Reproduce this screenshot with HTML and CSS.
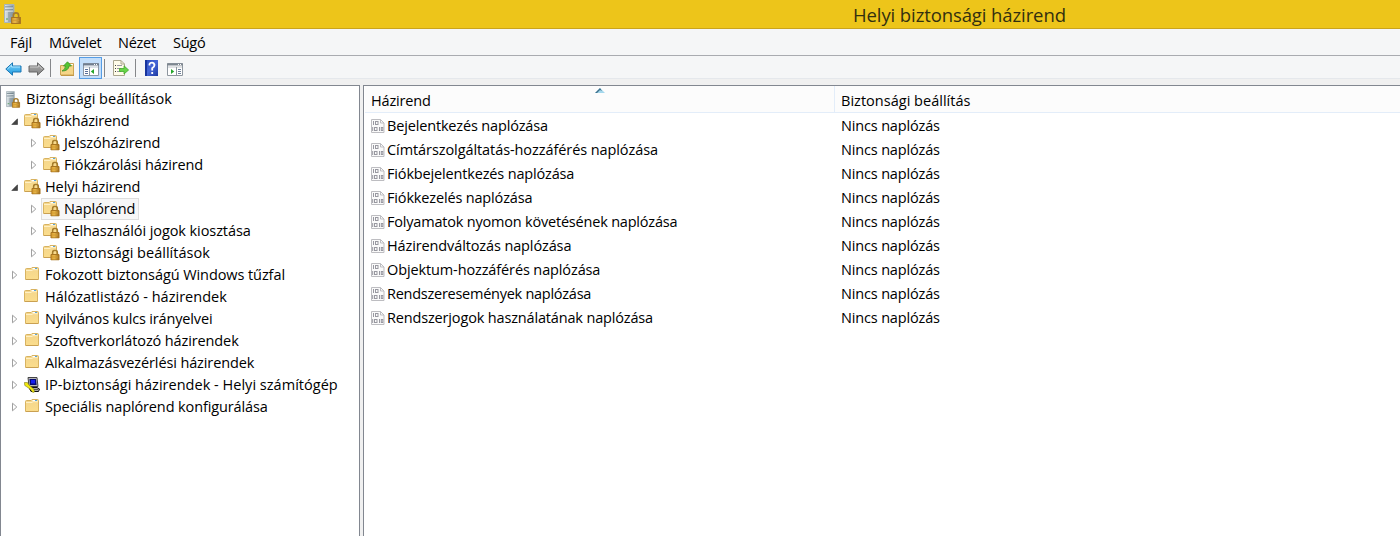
FILE: index.html
```html
<!DOCTYPE html>
<html lang="hu">
<head>
<meta charset="utf-8">
<title>Helyi biztonsági házirend</title>
<link rel="stylesheet" href="styles.css">
</head>
<body>
<svg class="defs" aria-hidden="true">
  <defs>
    <linearGradient id="gf" x1="0" y1="0" x2="0" y2="1"><stop offset="0" stop-color="#f3d58d"/><stop offset="1" stop-color="#fbdd8c"/></linearGradient>
    <linearGradient id="gl" x1="0" y1="0" x2="1" y2="0"><stop offset="0" stop-color="#d69a2c"/><stop offset=".4" stop-color="#e8b84c"/><stop offset="1" stop-color="#9c6b1c"/></linearGradient>
    <linearGradient id="gb" x1="0" y1="0" x2="0" y2="1"><stop offset="0" stop-color="#7cd0f8"/><stop offset="1" stop-color="#1c9ae0"/></linearGradient>
    <linearGradient id="gg" x1="0" y1="0" x2="0" y2="1"><stop offset="0" stop-color="#aaa"/><stop offset="1" stop-color="#858585"/></linearGradient>
    <linearGradient id="gs" x1="0" y1="0" x2="1" y2="0"><stop offset="0" stop-color="#dfe6e9"/><stop offset="1" stop-color="#8b9ba4"/></linearGradient>
    <linearGradient id="gh" x1="0" y1="0" x2="1" y2="1"><stop offset="0" stop-color="#2446b8"/><stop offset=".5" stop-color="#4667d8"/><stop offset="1" stop-color="#1c38a0"/></linearGradient>
  </defs>
  <symbol id="lock" viewBox="0 0 10 11">
    <path d="M2.6 5.500V3.200a2.300 2.300 0 0 1 4.800 0v2.300" fill="none" stroke="#a57c2c" stroke-width="1.500"/>
    <path d="M1 5h8v5.500H1z" fill="url(#gl)" stroke="#a87420"/>
    <path d="M2 7.500h6" stroke="#d39a30"/>
  </symbol>
  <symbol id="folder" viewBox="0 0 14 13">
    <path d="M.5 12.500v-10q0-1 1-1H6l1-1h5.500q1 0 1 1v11z" fill="url(#gf)" stroke="#d8b361"/>
    <path d="M7.500 1.500H12" stroke="#fff"/><path d="M10 1.500h2" stroke="#58a4dc"/>
    <path d="M1 3.500h6l1-.8h5" fill="none" stroke="#fff0c4"/>
    <path d="M1 12.500h12" stroke="#c9a052"/>
  </symbol>
  <symbol id="folderlock" viewBox="0 0 17 16">
    <use href="#folder" width="14" height="13"/>
    <use href="#lock" x="7" y="4.500" width="10" height="11"/>
  </symbol>
  <symbol id="server" viewBox="0 0 18 20">
    <path d="M.5.500h9.500V18.500H.500z" fill="url(#gs)" stroke="#a8b4ba"/>
    <path d="M1 3h8M1 6h8" stroke="#687a84" stroke-width="1"/>
    <path d="M1 4h8M1 7h8" stroke="#edf2f4" stroke-width=".8"/>
    <path d="M4 8h6v10H4z" fill="#758791" opacity=".45"/>
    <path d="M2 15h2" stroke="#4d9e58"/>
    <use href="#lock" x="6.500" y="8" width="11" height="12"/>
  </symbol>
  <symbol id="closed" viewBox="0 0 7 10"><path d="M1.500 1.200 5.800 5 1.500 8.800z" fill="#fff" stroke="#a0a0a0"/></symbol>
  <symbol id="open" viewBox="0 0 7 7"><path d="M6.500.8v5.700H.8z" fill="#444" stroke="#333" stroke-width=".6"/></symbol>
  <symbol id="ipsec" viewBox="0 0 16 16">
    <path d="M4 .5h9l1 9H5z" fill="#b8b8b8" stroke="#444"/><path d="M5.500 2H12l.6 6H6z" fill="#060a74"/><path d="M7 3h4v3.500H7z" fill="#1620f0"/>
    <path d="M5 10.500h8l2.500 1.500-1 2.500H7z" fill="#aaa" stroke="#111"/><path d="M8 12.500h6" stroke="#555"/>
    <path d="M.3 5.500h3.200l1.300 2.300 5 4.200.7 3-1.700.5-2-2.700-4-3-2-1.300z" fill="#f0e810" stroke="#66600c" stroke-width=".5"/>
  </symbol>
  <symbol id="policy" viewBox="0 0 14 14">
    <path d="M.5.500h9l3.500 3.500v9.500H.5z" fill="#fafafa" stroke="#bdbdc1"/><path d="M9.500.5V4H13" fill="none" stroke="#bdbdc1"/>
    <path d="M2.500 2v4M8.500 8v4" stroke="#9898a0"/><rect x="4.500" y="2.500" width="2.500" height="3" fill="none" stroke="#9898a0"/>
    <rect x="3.500" y="8.500" width="2.500" height="3" fill="none" stroke="#9898a0"/><rect x="10.300" y="8.500" width="1.500" height="3" fill="none" stroke="#9898a0"/><path d="M1.700 8v4" stroke="#9898a0"/>
  </symbol>
  <symbol id="back" viewBox="0 0 17 14"><path d="M.8 7 7.500.800V4H16v6H7.500v3.200z" fill="url(#gb)" stroke="#1c77b4"/><path d="M2.500 7 6.500 3.200V5H15" fill="none" stroke="#a9e4ff"/></symbol>
  <symbol id="forward" viewBox="0 0 17 14"><path d="M16.200 7 9.500.800V4H1v6h8.500v3.200z" fill="url(#gg)" stroke="#686868"/><path d="M2 5h8.500V3.200L14.300 7" fill="none" stroke="#c8c8c8"/></symbol>
  <symbol id="up" viewBox="0 0 15 15">
    <path d="M.5 14V4.500h6l1-2h6V14z" fill="#f5d588" stroke="#cda453"/><path d="M9 3.500h4" stroke="#fff"/><path d="M1 14.500h13" stroke="#c39847"/>
    <path d="M2 10Q5.500 8.500 5.500 5H3.500L7.500.8l4 4.200H9Q8.500 10 2 10z" fill="#54c530" stroke="#38912a" stroke-width=".8"/>
  </symbol>
  <symbol id="tree" viewBox="0 0 16 13">
    <path d="M.5.500h15v12H.5z" fill="#fff" stroke="#8b96a5"/><path d="M0 1.500h16" stroke="#6f7d8f" stroke-width="2"/><path d="M11 1.500h1M13 1.500h1" stroke="#fff"/>
    <path d="M1 4h14" stroke="#bcc7d4"/><path d="M6.500 4v8" stroke="#8b96a5"/><path d="M2 6.500h3M2 8.500h3M2 10.500h3" stroke="#596f9a"/><path d="M11 6v5L7.800 8.500z" fill="#25a52a"/>
  </symbol>
  <symbol id="pane" viewBox="0 0 16 13">
    <path d="M.5.500h15v12H.5z" fill="#fff" stroke="#8e969f"/><path d="M0 1.500h16" stroke="#7e8790" stroke-width="2"/><path d="M11 1.500h1M13 1.500h1" stroke="#fff"/>
    <path d="M1 4h14" stroke="#c2c6ca"/><path d="M9.500 4v8" stroke="#8e969f"/><path d="M11 6.500h3M11 8.500h3M11 10.500h3" stroke="#6e7f98"/><path d="M4 6v5l3.200-2.500z" fill="#25a52a"/>
  </symbol>
  <symbol id="export" viewBox="0 0 16 16">
    <path d="M.5.500h7.500L11.500 4v11.500H.5z" fill="#fffce8" stroke="#aaa68e"/><path d="M8 .5V4h3.500" fill="none" stroke="#aaa68e"/>
    <path d="M2 5.500h1M2 8.500h1M2 11.500h1" stroke="#444"/><path d="M4 5.500h5M4 8.500h4M4 11.500h4" stroke="#9997a5"/>
    <path d="M6.500 8.500H11V5.800L15.600 10 11 14v-2.500H6.500z" fill="#67d448" stroke="#43a82c" stroke-width=".8"/>
  </symbol>
  <symbol id="help" viewBox="0 0 13 16"><path d="M0 0h13v16H0z" fill="url(#gh)"/><path d="M1 0v16" stroke="#17349d" stroke-width="2"/><path d="M4.500 5.500V4Q5 2.700 7 2.700T9.500 5Q9.500 6.600 7.200 8.200V10.500M7.200 12v2" fill="none" stroke="#fff" stroke-width="1.800"/></symbol>
</svg>

<header class="titlebar">
  <svg class="app-icon"><use href="#server"/></svg>
  <h1 class="title">Helyi biztonsági házirend</h1>
</header>
<nav class="menubar"><span class="m1">Fájl</span><span class="m2">Művelet</span><span class="m3">Nézet</span><span class="m4">Súgó</span></nav>
<div class="toolbar">
  <svg class="t-arrow"><use href="#back"/></svg>
  <svg class="t-arrow t-forward"><use href="#forward"/></svg>
  <i class="sep sep1"></i>
  <svg class="t-up"><use href="#up"/></svg>
  <span class="pressed"><svg class="t-pane"><use href="#tree"/></svg></span>
  <i class="sep sep2"></i>
  <svg class="t-export"><use href="#export"/></svg>
  <i class="sep sep3"></i>
  <svg class="t-help"><use href="#help"/></svg>
  <svg class="t-pane"><use href="#pane"/></svg>
</div>
<main class="panes">
  <ul class="tree">
    <li class="root"><svg class="i-server"><use href="#server"/></svg><span class="wide">Biztonsági beállítások</span></li>
    <li><svg class="tw-open"><use href="#open"/></svg><svg class="i-lock"><use href="#folderlock"/></svg><span class="tight">Fiókházirend</span></li>
    <li class="sub"><svg class="tw"><use href="#closed"/></svg><svg class="i-lock"><use href="#folderlock"/></svg><span class="mid">Jelszóházirend</span></li>
    <li class="sub"><svg class="tw"><use href="#closed"/></svg><svg class="i-lock"><use href="#folderlock"/></svg><span>Fiókzárolási házirend</span></li>
    <li><svg class="tw-open"><use href="#open"/></svg><svg class="i-lock"><use href="#folderlock"/></svg><span class="mid">Helyi házirend</span></li>
    <li class="sub"><svg class="tw"><use href="#closed"/></svg><div class="selected"><svg class="i-lock"><use href="#folderlock"/></svg><span class="mid">Naplórend</span></div></li>
    <li class="sub"><svg class="tw"><use href="#closed"/></svg><svg class="i-lock"><use href="#folderlock"/></svg><span class="mid">Felhasználói jogok kiosztása</span></li>
    <li class="sub"><svg class="tw"><use href="#closed"/></svg><svg class="i-lock"><use href="#folderlock"/></svg><span class="wide">Biztonsági beállítások</span></li>
    <li><svg class="tw"><use href="#closed"/></svg><svg class="i-folder"><use href="#folder"/></svg><span class="mid">Fokozott biztonságú Windows tűzfal</span></li>
    <li><svg class="tw"></svg><svg class="i-folder nudge"><use href="#folder"/></svg><span class="wide">Hálózatlistázó - házirendek</span></li>
    <li><svg class="tw"><use href="#closed"/></svg><svg class="i-folder"><use href="#folder"/></svg><span>Nyilvános kulcs irányelvei</span></li>
    <li><svg class="tw"><use href="#closed"/></svg><svg class="i-folder"><use href="#folder"/></svg><span class="soft">Szoftverkorlátozó házirendek</span></li>
    <li><svg class="tw"><use href="#closed"/></svg><svg class="i-folder"><use href="#folder"/></svg><span class="soft">Alkalmazásvezérlési házirendek</span></li>
    <li><svg class="tw"><use href="#closed"/></svg><svg class="i-ipsec"><use href="#ipsec"/></svg><span class="wide">IP-biztonsági házirendek - Helyi számítógép</span></li>
    <li><svg class="tw"><use href="#closed"/></svg><svg class="i-folder"><use href="#folder"/></svg><span class="soft">Speciális naplórend konfigurálása</span></li>
  </ul>
  <section class="list">
    <div class="head">
      <div class="col1"><span>Házirend</span><svg class="sort" viewBox="0 0 10 5"><path d="M5 0 10 5H0z" fill="#a5d8ed"/><path d="M5 0 0 5h2l3-3 2 1z" fill="#3c6f8a"/></svg></div>
      <div class="col2"><span class="wide">Biztonsági beállítás</span></div>
    </div>
    <div class="row"><div class="name"><svg><use href="#policy"/></svg><span>Bejelentkezés naplózása</span></div><span>Nincs naplózás</span></div>
    <div class="row"><div class="name"><svg><use href="#policy"/></svg><span class="mid">Címtárszolgáltatás-hozzáférés naplózása</span></div><span>Nincs naplózás</span></div>
    <div class="row"><div class="name"><svg><use href="#policy"/></svg><span>Fiókbejelentkezés naplózása</span></div><span>Nincs naplózás</span></div>
    <div class="row"><div class="name"><svg><use href="#policy"/></svg><span>Fiókkezelés naplózása</span></div><span>Nincs naplózás</span></div>
    <div class="row"><div class="name"><svg><use href="#policy"/></svg><span class="tight">Folyamatok nyomon követésének naplózása</span></div><span>Nincs naplózás</span></div>
    <div class="row"><div class="name"><svg><use href="#policy"/></svg><span class="soft">Házirendváltozás naplózása</span></div><span>Nincs naplózás</span></div>
    <div class="row"><div class="name"><svg><use href="#policy"/></svg><span class="soft">Objektum-hozzáférés naplózása</span></div><span>Nincs naplózás</span></div>
    <div class="row"><div class="name"><svg><use href="#policy"/></svg><span class="tightest">Rendszeresemények naplózása</span></div><span>Nincs naplózás</span></div>
    <div class="row"><div class="name"><svg><use href="#policy"/></svg><span>Rendszerjogok használatának naplózása</span></div><span>Nincs naplózás</span></div>
  </section>
</main>
</body>
</html>
```
FILE: styles.css
```css
* { box-sizing: border-box; }
body { margin: 0; height: 536px; overflow: hidden; display: flex; flex-direction: column; background: #f0f0f0; color: #000; font: 14.5px/20px "Segoe UI", "Open Sans", "Noto Sans", sans-serif; letter-spacing: -0.16px; white-space: nowrap; }
svg { flex: none; display: block; }
.tightest { letter-spacing: -0.26px; }
.tight { letter-spacing: -0.2px; }
.soft { letter-spacing: -0.12px; }
.mid { letter-spacing: -0.08px; }
.wide { letter-spacing: 0.02px; }
.defs { position: absolute; width: 0; height: 0; }
.titlebar { height: 29px; flex: none; display: flex; background: #edc51a; border-bottom: 1px solid #caa41c; }
.app-icon { width: 18px; height: 20px; margin: 4px 0 0 4px; }
.title { margin: 2px 0 0 831px; font-size: 18.5px; line-height: 26px; font-weight: 400; letter-spacing: -0.1px; color: #33300f; }
.menubar { height: 27px; flex: none; padding: 4px 0 0 10px; display: flex; background: #f5f6f7; border-bottom: 1px solid #a9abb0; letter-spacing: -0.25px; }
.m1 { width: 39px; }
.m2 { width: 69px; }
.m3 { width: 55px; }
.toolbar { height: 23px; flex: none; display: flex; align-items: flex-start; padding-left: 5px; background: #f5f6f7; border-bottom: 1px solid #e5e8ec; }
.t-arrow { width: 17px; height: 14px; margin-top: 6px; }
.t-forward { margin-left: 6px; }
.sep { width: 1px; height: 18px; margin-top: 3px; background: #85878a; }
.sep1 { margin-left: 5px; }
.sep2 { margin-left: 2px; }
.sep3 { margin-left: 6px; }
.t-up { width: 15px; height: 15px; margin: 5px 0 0 9px; }
.pressed { width: 23px; height: 22px; margin: 1px 0 0 4px; padding: 5px 0 0 3px; background: #c3defa; border: 1px solid #569de5; }
.t-pane { width: 16px; height: 13px; }
.t-export { width: 16px; height: 16px; margin: 4px 0 0 8px; }
.t-help { width: 13px; height: 16px; margin: 4px 9px 0 9px; }
.t-help + .t-pane { margin-top: 7px; }
.panes { flex: 1; margin-top: 6px; display: flex; gap: 3px; }
.tree { width: 360px; flex: none; margin: 0; padding: 2px 0 0 4px; list-style: none; background: #fff; border: 1px solid #828790; border-bottom: 0; }
.tree li { height: 22px; display: flex; align-items: center; padding-left: 6px; }
.tree .root { padding-left: 1px; }
.tree .sub { padding-left: 25px; }
.i-server { width: 15px; height: 17px; margin-right: 5px; }
.tw { width: 7px; height: 10px; margin-right: 6px; }
.tw-open { width: 7px; height: 7px; margin-right: 6px; }
.i-lock { width: 17px; height: 16px; margin-right: 4px; }
.i-folder { width: 14px; height: 13px; margin: -3px 6px 0 1px; }
.i-ipsec { width: 16px; height: 16px; margin-right: 5px; }
.nudge { margin: -3px 7px 0 0; }
.selected { height: 22px; display: flex; align-items: center; background: #f7f7f7; border: 1px solid #dedede; margin-left: -2px; padding: 0 3px 0 1px; }
.list { flex: 1; background: #fff; border: 1px solid #828790; border-right: 0; border-bottom: 0; padding-left: 1px; }
.head { height: 27px; display: flex; background: #fcfcfc; border-bottom: 1px solid #e3edf9; line-height: 29px; }
.col1 { position: relative; width: 470px; padding-left: 6px; border-right: 1px solid #e3edf9; }
.col2 { padding-left: 6px; }
.sort { position: absolute; left: 230px; top: 2px; width: 10px; height: 5px; }
.row { height: 24px; display: flex; align-items: center; }
.row:nth-child(2) { margin-top: 1px; }
.name { width: 476px; display: flex; align-items: center; padding-left: 6px; }
.name svg { width: 14px; height: 14px; margin: -1px 2px 0 0; }
```
